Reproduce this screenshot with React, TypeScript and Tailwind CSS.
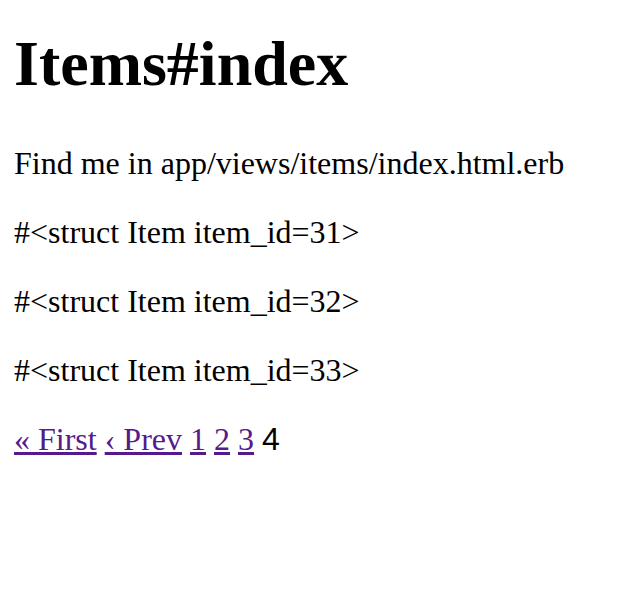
import React from 'react';

const items = [31, 32, 33];

const App: React.FC = () => {
  return (
    <div className="bg-white min-h-[616px] pt-[27px] pl-[14px] text-black font-['Liberation_Serif',serif]">
      <h1 className="m-0 text-[64px] leading-[74px] font-bold">Items#index</h1>
      <p className="mt-[44px] text-[32px] leading-[37px]">Find me in app/views/items/index.html.erb</p>

      {items.map((id) => (
        <p key={id} className="mt-[32px] text-[32px] leading-[37px]">
          {`#<struct Item item_id=${id}>`}
        </p>
      ))}

      {/* kaminari-style pager */}
      <nav className="mt-[32px] text-[32px] leading-[37px]">
        <a href="#" className="text-[#551a8b] underline">« First</a>{' '}
        <a href="#" className="text-[#551a8b] underline">‹ Prev</a>{' '}
        <a href="#" className="text-[#551a8b] underline">1</a>{' '}
        <a href="#" className="text-[#551a8b] underline">2</a>{' '}
        <a href="#" className="text-[#551a8b] underline">3</a>{' '}
        <span className="font-['Liberation_Sans',sans-serif]">4</span>
      </nav>
    </div>
  );
};

export default App;
